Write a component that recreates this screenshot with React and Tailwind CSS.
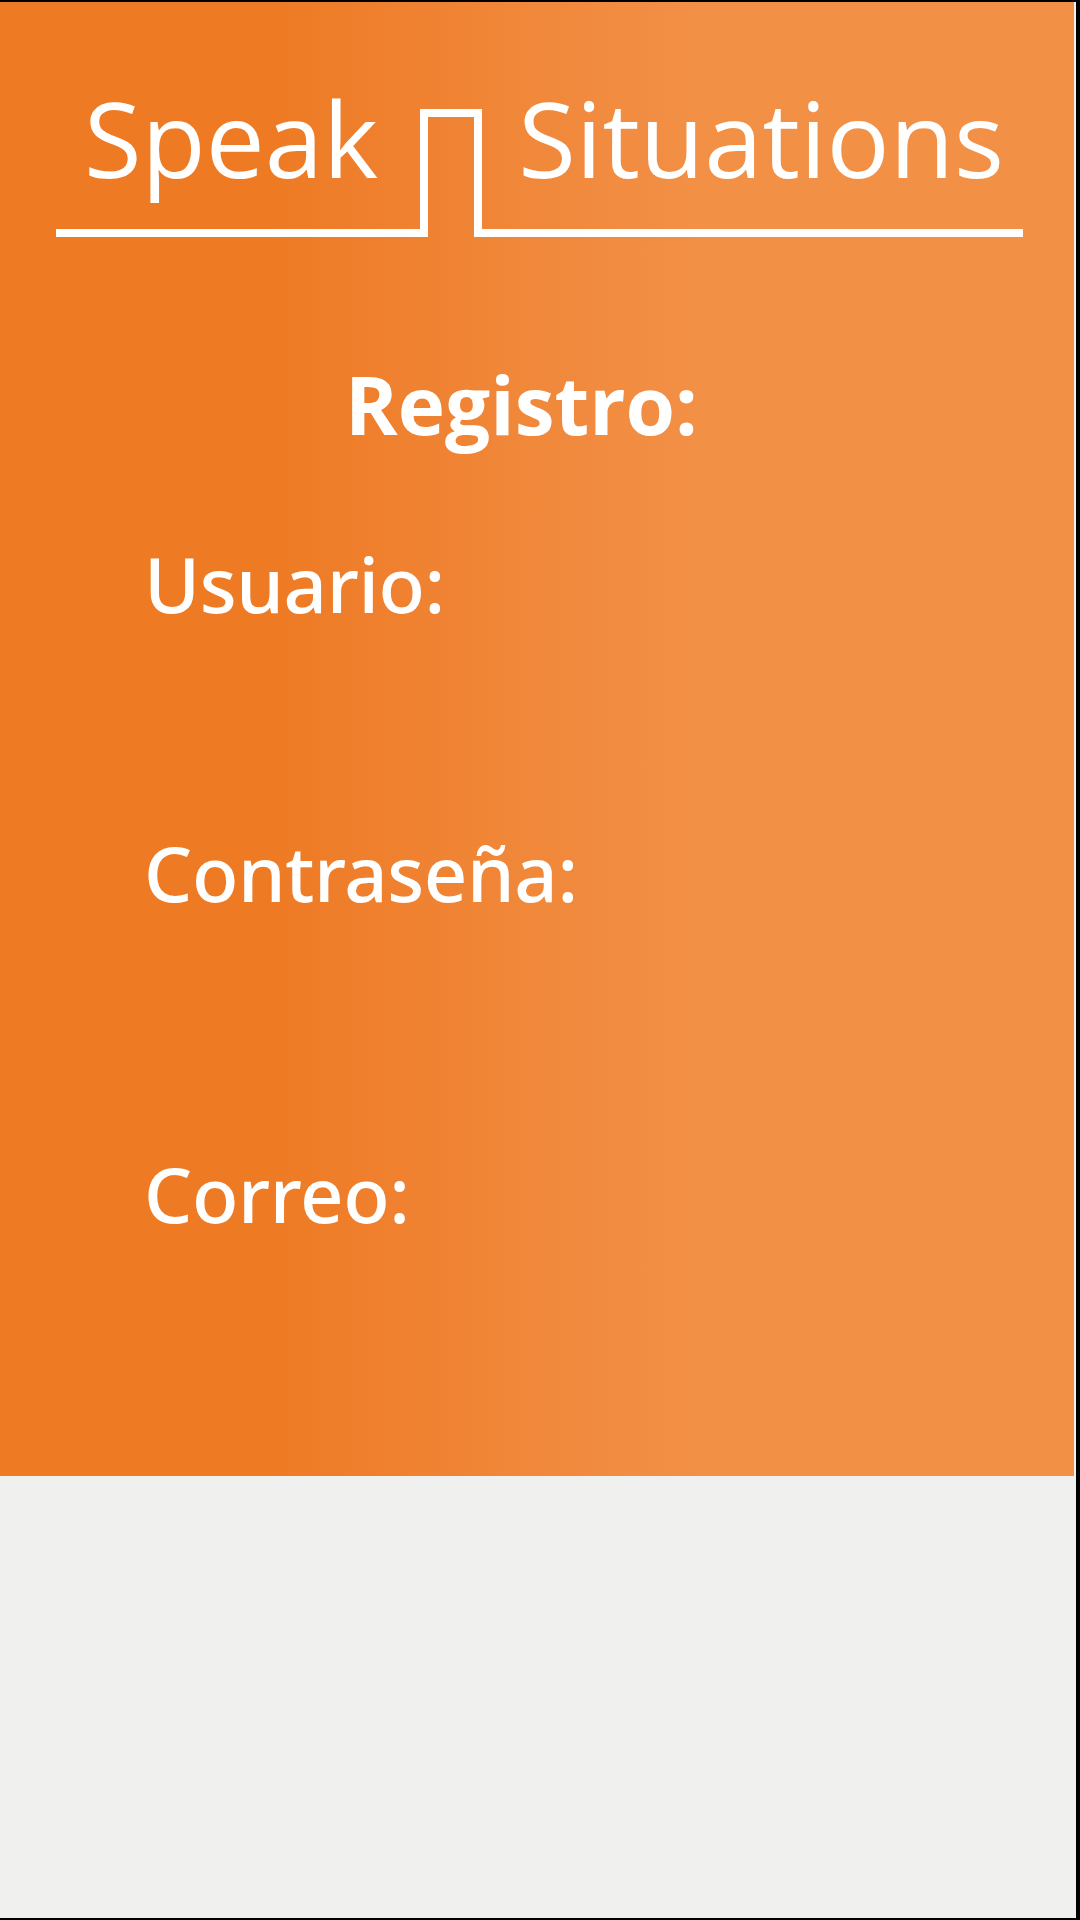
import React from 'react'

const Logo = () => {
  return (
    <div className="relative h-[155px]">
      <div className="flex items-start text-[105px] leading-none text-white">
        <span className="ml-[84px]">Speak</span>
        <span className="ml-[140px]">Situations</span>
      </div>
      <svg
        className="absolute left-0 top-0"
        width="1074"
        height="155"
        viewBox="0 0 1074 155"
        fill="none"
      >
        <path
          d="M56 148 H424 V28 H478 V148 H1023"
          stroke="#ffffff"
          strokeWidth="8"
          strokeLinejoin="miter"
        />
      </svg>
    </div>
  )
}

const Field = ({ label, className }) => (
  <p className={`pl-[144px] font-['Noto_Sans',sans-serif] text-[76px] font-medium tracking-[-0.005em] leading-none text-white ${className}`}>{label}</p>
)

const App = () => {
  return (
    <div className="w-[1080px] h-[1920px] bg-black pt-[2px] pb-[2px] pr-[4px] font-['Open_Sans',sans-serif]">
      <div className="h-full bg-[#f0f1ee]">
        <div className="w-[1074px] h-[1474px] pt-[83px] bg-linear-to-r from-[#ee7a23] from-25% to-[#f29046] to-65%">
          <Logo />

          <h1 className="mt-[124px] pl-[345px] text-[80px] font-bold leading-none text-white">Registro:</h1>

          <Field label="Usuario:" className="mt-[102px]" />
          <Field label="Contraseña:" className="mt-[213px]" />
          <Field label="Correo:" className="mt-[245px]" />
        </div>
      </div>
    </div>
  )
}

export default App
